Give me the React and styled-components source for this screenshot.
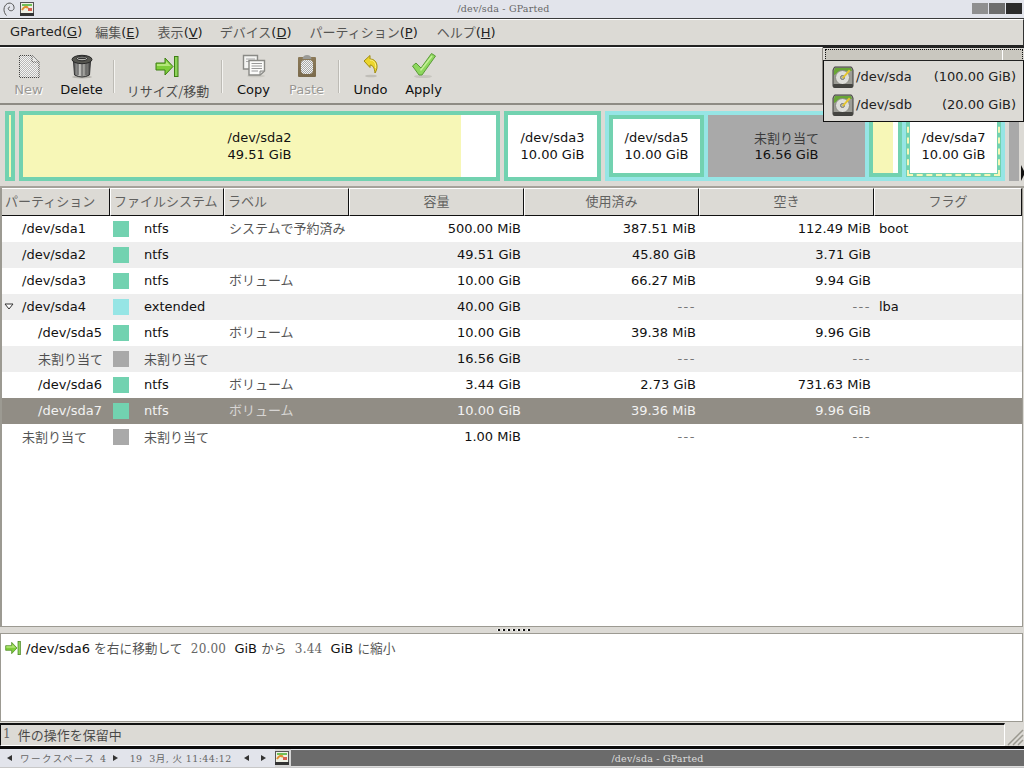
import React from 'react';
import styled, { createGlobalStyle } from 'styled-components';

const Global = createGlobalStyle`
	html, body {
		margin: 0;
		padding: 0;
		background: #dcdad5;
	}
	#root {
		width: 1024px;
		height: 768px;
		overflow: hidden;
	}
	* {
		box-sizing: border-box;
	}
`;

const BG = '#dcdad5';
const GREEN = '#72d2b0';
const CYAN = '#96e5e5';
const YELLOW = '#f7f7b7';
const GRAY = '#a9a9a9';
const LATIN = '"DejaVu Sans", "Noto Sans CJK JP", sans-serif';
const SERIF = '"DejaVu Serif", "Noto Sans CJK JP", serif';

const Screen = styled.div`
	position: relative;
	width: 1024px;
	height: 768px;
	display: flex;
	flex-direction: column;
	background: ${BG};
	font-family: ${LATIN};
	font-size: 13px;
	color: #111;
`;

const Jp = styled.span`
	font-family: "Noto Sans CJK JP", sans-serif;
	font-weight: 400;
	opacity: 0.72;
`;

/* window manager title */
const TitleBar = styled.div`
	height: 19px;
	flex: none;
	display: flex;
	align-items: center;
	padding: 0 2px 1px 3px;
	background: #e2e4eb;
	border-bottom: 1px solid #3a3a3a;
`;

const TitleIcons = styled.div`
	width: 300px;
	display: flex;
	align-items: center;
	gap: 5px;
`;

const TitleText = styled.div`
	flex: 1;
	text-align: center;
	font-family: ${SERIF};
	font-size: 9.5px;
	letter-spacing: 0.2px;
	color: #666;
	padding-right: 268px;
`;

const WinButtons = styled.div`
	display: flex;
	gap: 1px;
`;

const WinButton = styled.div`
	width: 16px;
	height: 11px;
	background: ${p => p.$color};
`;

/* menu */
const MenuBar = styled.div`
	height: 28px;
	flex: none;
	display: flex;
	align-items: center;
	padding: 0 0 3px 10px;
	background: ${BG};
	border-top: 1px solid #fff;
	border-bottom: 2px solid #222;
	border-right: 1px solid #333;
`;

const MenuItem = styled.div`
	margin-right: ${p => p.$gap}px;
	white-space: nowrap;
	color: #222;
`;

const Key = styled.span`
	text-decoration: underline;
`;

/* toolbar */
const ToolRow = styled.div`
	height: 58px;
	flex: none;
	display: flex;
`;

const Toolbar = styled.div`
	width: 823px;
	display: flex;
	align-items: stretch;
	padding-left: 2px;
	background: ${BG};
	border-top: 1px solid #fff;
	border-bottom: 2px solid #8e8b84;
	border-right: 1px solid #8e8b84;
`;

const Tool = styled.div`
	width: ${p => p.$w}px;
	display: flex;
	flex-direction: column;
	align-items: center;
	padding-top: 5px;
	color: ${p => (p.$off ? '#9a9894' : '#111')};
	text-shadow: ${p => (p.$off ? '1px 1px 0 #fff' : 'none')};
`;

const ToolIcon = styled.svg`
	width: 26px;
	height: 26px;
	display: block;
`;

const ResizeSvg = styled.svg`
	width: ${p => (p.$small ? 16 : 24)}px;
	height: ${p => (p.$small ? 16 : 21)}px;
	margin: ${p => (p.$small ? '0' : '3px 3px 2px 0')};
	flex: none;
	display: block;
`;

const ToolLabel = styled.div`
	margin-top: ${p => p.$top || 3}px;
	line-height: 16px;
	white-space: nowrap;
`;

const ToolSep = styled.div`
	width: 2px;
	height: 33px;
	margin: 12px ${p => p.$r}px 0 ${p => p.$l}px;
	background: #f4f3f0;
	border-left: 1px solid #bdbbb5;
`;

const ComboSlot = styled.div`
	flex: 1;
	background: ${BG};
	border-top: 1px solid #222;
	padding: 1px 1px 0 2px;
`;

const ComboFocus = styled.div`
	height: 12px;
	display: flex;
	justify-content: flex-end;
	background: #c9c7bf;
	border: 1px dotted #111;
`;

const ComboArrowCell = styled.div`
	width: 20px;
	border-left: 1px solid #fff;
`;

const Popup = styled.div`
	position: absolute;
	left: 823px;
	top: 60px;
	width: 201px;
	height: 62px;
	padding: 2px 0 0 8px;
	background: ${BG};
	border: 1px solid #111;
	border-top-color: #222;
	z-index: 2;
`;

const PopupRow = styled.div`
	height: 28px;
	display: flex;
	align-items: center;
	gap: 2px;
	padding-right: 7px;
	color: #222;
`;

const PopupText = styled.span`
	padding-bottom: 1px;
`;

const PopupSize = styled(PopupText)`
	margin-left: auto;
`;

/* partition graph */
const Graph = styled.div`
	height: 83px;
	flex: none;
	display: flex;
	gap: 4px;
	padding: 6px 0 0 5px;
	background: ${BG};
	border-bottom: 2px solid #a5a29b;
`;

const PartBox = styled.div`
	width: ${p => p.$w}px;
	height: ${p => p.$h || 70}px;
	flex: none;
	display: flex;
	flex-direction: column;
	align-items: center;
	justify-content: center;
	line-height: 17px;
	padding-bottom: 1px;
	overflow: hidden;
	border: 4px solid ${p => p.$color || GREEN};
	background: ${p => (p.$used !== undefined ? `linear-gradient(90deg, ${YELLOW} ${p.$used}%, #fff ${p.$used}%)` : '#fff')};
	white-space: nowrap;
`;

const SelectedBox = styled(PartBox)`
	outline: 2px dashed ${YELLOW};
	outline-offset: -3px;
`;

const ExtendedBox = styled.div`
	width: 400px;
	height: 70px;
	flex: none;
	display: flex;
	gap: 4px;
	border: 4px solid ${CYAN};
	background: ${CYAN};
`;

const Unallocated = styled.div`
	width: ${p => p.$w}px;
	flex: none;
	display: flex;
	flex-direction: column;
	align-items: center;
	justify-content: center;
	line-height: 17px;
	height: ${p => p.$h}px;
	background: ${GRAY};
`;

const Pointer = styled.div`
	position: absolute;
	left: 1021px;
	top: 165px;
	width: 0;
	height: 0;
	border-top: 8px solid transparent;
	border-bottom: 8px solid transparent;
	border-left: 4px solid #111;
`;

/* list */
const ListFrame = styled.div`
	flex: 1;
	min-height: 0;
	margin-right: 1px;
	background: #fff;
	border-left: 2px solid #9c9a92;
	border-right: 1px solid #9c9a92;
	border-bottom: 1px solid #9c9a92;
`;

const COLS = '108px 114px 125px 175px 175px 175px 148px';

const HeadRow = styled.div`
	display: grid;
	grid-template-columns: ${COLS};
	height: 28px;
	background: ${BG};
`;

const HeadCell = styled.div`
	display: flex;
	align-items: center;
	justify-content: ${p => (p.$center ? 'center' : 'flex-start')};
	padding: 0 0 4px ${p => (p.$center ? 0 : 3)}px;
	border-top: 1px solid #fff;
	border-left: ${p => (p.$first ? 0 : 1)}px solid #fff;
	border-right: 1px solid #111;
	border-bottom: 1px solid #111;
	color: #333;
	white-space: nowrap;
`;

const Row = styled.div`
	display: grid;
	grid-template-columns: ${COLS};
	height: 26px;
	align-items: center;
	background: ${p => (p.$selected ? '#918d85' : p.$alt ? '#eeeeee' : '#fff')};
	color: ${p => (p.$selected ? '#f2f2f2' : '#111')};
`;

const NameCell = styled.div`
	display: flex;
	align-items: center;
	padding: 0 0 2px ${p => p.$indent}px;
	white-space: nowrap;
`;

const Expander = styled.svg`
	width: 10px;
	height: 7px;
	flex: none;
	margin-left: -18px;
	margin-right: 8px;
`;

const FsCell = styled.div`
	display: flex;
	align-items: center;
	gap: 15px;
	white-space: nowrap;
	padding-left: 3px;
`;

const FsName = styled.span`
	padding-bottom: 2px;
`;

const Swatch = styled.span`
	width: 16px;
	height: 16px;
	flex: none;
	background: ${p => p.$color};
`;

const TextCell = styled.div`
	padding: 0 0 2px 5px;
	white-space: nowrap;
`;

const LabelCell = styled(TextCell)`
	padding-bottom: 4px;
`;

const NumCell = styled.div`
	text-align: right;
	padding: 0 3px 2px 0;
	white-space: nowrap;
	letter-spacing: ${p => (p.$dash ? '1.5px' : '0')};
	color: ${p => (p.$dash ? '#777' : 'inherit')};
`;

/* lower part */
const Handle = styled.div`
	height: 6px;
	flex: none;
	display: flex;
	justify-content: center;
	align-items: center;
	background: ${BG};
`;

const Grip = styled.div`
	width: 35px;
	height: 2px;
	margin-left: 4px;
	background: repeating-linear-gradient(90deg, #fff 0 1px, #111 1px 3px, transparent 3px 5px);
`;

const LogFrame = styled.div`
	height: 89px;
	flex: none;
	margin-right: 1px;
	padding: 5px 4px;
	background: #fff;
	border: 1px solid #9c9a92;
`;

const LogLine = styled.div`
	display: flex;
	align-items: center;
	gap: 5px;
	height: 17px;
	white-space: pre;
`;

const LogJp = styled(Jp)`
	font-size: 12.7px;
`;

const LogNum = styled.span`
	font-family: ${SERIF};
	font-size: 12px;
	color: #666;
	letter-spacing: 0.2px;
`;

const StatusBar = styled.div`
	height: 24px;
	flex: none;
	display: flex;
	padding-top: 1px;
	background: ${BG};
`;

const StatusText = styled.div`
	flex: 1;
	display: flex;
	align-items: center;
	gap: 7px;
	padding: 0 0 2px 2px;
	border-top: 2px solid #111;
	border-left: 1px solid #111;
	border-bottom: 1px solid #fff;
	border-right: 1px solid #fff;
	white-space: pre;
`;

const GripBox = styled.svg`
	width: 19px;
	height: 23px;
	flex: none;
	display: block;
`;

const BlackLine = styled.div`
	height: 3px;
	flex: none;
	background: #0c0c0c;
`;

const Panel = styled.div`
	height: 19px;
	flex: none;
	display: flex;
	align-items: center;
	background: #e2e4eb;
	border-bottom: 1px solid #c8c8c8;
	font-family: ${SERIF};
	font-size: 9.5px;
	color: #666;
`;

const PanelLeft = styled.div`
	width: 275px;
	flex: none;
	display: flex;
	align-items: center;
	padding-left: 7px;
	white-space: pre;
`;

const PanelText = styled.span`
	letter-spacing: ${p => p.$ls}px;
`;

const PanelArrow = styled.span`
	width: 0;
	height: 0;
	margin: ${p => p.$m};
	border-top: 3px solid transparent;
	border-bottom: 3px solid transparent;
	border-${p => (p.$left ? 'right' : 'left')}: 5px solid #333;
`;

const TaskButton = styled.div`
	flex: 1;
	align-self: stretch;
	display: flex;
	align-items: center;
	margin: 1px 0 0;
	background: #6b6b6b;
	border-bottom: 1px solid #ddd;
`;

const TaskIconWrap = styled.div`
	width: 16px;
	height: 18px;
	display: flex;
	align-items: center;
	background: #d4d4d4;
`;

const TaskTitle = styled.div`
	flex: 1;
	text-align: center;
	letter-spacing: 0.2px;
	color: #ddd;
`;

const Gparted = ({ size = 14 }) => (
	<svg width={size} height={size} viewBox="0 0 14 14">
		<rect x="0.5" y="0.5" width="13" height="11" fill="#eef0e4" stroke="#555" />
		<rect x="2" y="2" width="10" height="2" fill="#6fbf58" />
		<path d="M2 8 Q5 3 8 6" stroke="#e09030" strokeWidth="2" fill="none" />
		<rect x="8" y="6" width="4" height="3" fill="#d86050" />
		<rect x="0" y="11" width="14" height="3" fill="#333" />
	</svg>
);

const Swirl = () => (
	<svg width="12" height="14" viewBox="0 0 12 14">
		<path d="M3.5 13.5 C0 10 0 4 4.5 1.5 C8.5 0 11.5 3 11 6.5 C10.5 9 7 9.5 5.5 7.5 C4.8 6.3 5.5 5 7 5" fill="none" stroke="#555" strokeWidth="1" />
	</svg>
);

const Disk = () => (
	<svg width="22" height="22" viewBox="0 0 22 22">
		<path d="M2.5 1 H19.5 L21 4 V20 Q21 21.5 19 21.5 H3 Q1 21.5 1 20 V4 Z" fill="#9c9c95" stroke="#3f3f3c" />
		<path d="M3 2 H19 L20 5 Q11 3.5 2 9 V5 Z" fill="#69a636" />
		<circle cx="10.5" cy="11.5" r="7" fill="#dededa" stroke="#8a8a82" />
		<circle cx="10.5" cy="11.5" r="2" fill="#b9b9b1" stroke="#77776f" />
		<path d="M10 11.5 L17 3.5 L18.5 5 L11.5 12.5 Z" fill="#e5c62f" />
		<rect x="1" y="18" width="20" height="3.5" rx="1" fill="#444440" />
	</svg>
);

const Dither = ({ id, a, b }) => (
	<pattern id={id} width="2" height="2" patternUnits="userSpaceOnUse">
		<rect width="2" height="2" fill={b} />
		<rect width="1" height="1" fill={a} />
		<rect x="1" y="1" width="1" height="1" fill={a} />
	</pattern>
);

const NewIcon = () => (
	<ToolIcon viewBox="0 0 26 26">
		<defs>
			<Dither id="newd" a="#b8b8b8" b="#f6f6f4" />
			<Dither id="newe" a="#444" b="#dcdad5" />
		</defs>
		<path d="M3.5 2.5 H16 L23 9 V24.5 H3.5 Z" fill="url(#newd)" stroke="url(#newe)" />
		<path d="M16 2.5 V9 H23" fill="#e8e8e6" stroke="url(#newe)" />
	</ToolIcon>
);

const TrashIcon = () => (
	<ToolIcon viewBox="0 0 26 26">
		<defs>
			<linearGradient id="canb" x1="0" x2="1" y1="0" y2="0">
				<stop offset="0" stopColor="#4d4d4d" />
				<stop offset="0.35" stopColor="#c2c2be" />
				<stop offset="0.75" stopColor="#8a8a86" />
				<stop offset="1" stopColor="#3d3d3d" />
			</linearGradient>
		</defs>
		<ellipse cx="13" cy="24" rx="10" ry="1.5" fill="#b5b3ad" />
		<path d="M4.5 8 L5.5 22 Q13 26 20.5 22 L21.5 8 Z" fill="url(#canb)" stroke="#333" />
		<path d="M9 11 V22 M13 11 V23.5 M17 11 V22" stroke="#555" strokeWidth="1" />
		<ellipse cx="13" cy="6.5" rx="10" ry="4.2" fill="#55554f" stroke="#2a2a2a" />
		<ellipse cx="13" cy="5.5" rx="5.5" ry="2.3" fill="#b5b5af" stroke="#2a2a2a" />
		<rect x="9" y="4.5" width="8" height="1.6" rx="0.8" fill="#333" />
	</ToolIcon>
);

const ResizeIcon = ({ small }) => (
	<ResizeSvg $small={small} viewBox="0 0 24 21">
		<path d="M1 7 H10 V2 L18 10.5 L10 19 V14 H1 Z" fill="#7fce3a" stroke="#3f7f15" />
		<path d="M2 8 H11 V5 L16 10 H2 Z" fill="#b5e67a" />
		<rect x="19.5" y="0.5" width="3.5" height="20" fill="#8ed25a" stroke="#3f7f15" />
	</ResizeSvg>
);

const CopyIcon = () => (
	<ToolIcon viewBox="0 0 26 26">
		<ellipse cx="15" cy="23" rx="9" ry="1.3" fill="#cbc9c3" />
		<path d="M2.5 2.5 H16.5 V16 H2.5 Z" fill="#f4f4f2" stroke="#8a8a86" strokeWidth="1.4" />
		<path d="M5 6 H14 M5 8.5 H14" stroke="#aaa" />
		<path d="M8 7.5 H23.5 V18 L19 22 H8 Z" fill="#fbfbfa" stroke="#8a8a86" strokeWidth="1.4" />
		<path d="M10.5 10.5 H21 M10.5 13 H21 M10.5 15.5 H21 M10.5 18 H17" stroke="#999" />
		<path d="M19 22 V18 H23.5 Z" fill="#d5d5d2" stroke="#8a8a86" />
	</ToolIcon>
);

const PasteIcon = () => (
	<ToolIcon viewBox="0 0 26 26">
		<defs>
			<linearGradient id="pasted" x1="0" x2="0" y1="0" y2="1">
				<stop offset="0" stopColor="#8c7a58" />
				<stop offset="1" stopColor="#7a6a4c" />
			</linearGradient>
			<Dither id="pastei" a="#a8a8a8" b="#f4f4f2" />
		</defs>
		<rect x="4" y="4" width="18" height="20" rx="1" fill="url(#pasted)" />
		<rect x="7" y="7" width="12" height="14" rx="4" fill="url(#pastei)" />
		<path d="M8.5 6 Q9 2 13 2 Q17 2 17.5 6 Z" fill="#9a9a96" />
	</ToolIcon>
);

const UndoIcon = () => (
	<ToolIcon viewBox="0 0 26 26">
		<path d="M6 8 L12 2.5 V6 C19 6 21 14 17 20 C16.5 15 15 12 12 12 V14.5 Z" fill="#ecd62d" stroke="#a08c10" strokeLinejoin="round" />
		<path d="M12 7 C16 7 18.5 11 17.5 15" fill="none" stroke="#fff38a" />
		<ellipse cx="13" cy="23" rx="6" ry="1.3" fill="#c0beb8" />
	</ToolIcon>
);

const ApplyIcon = () => (
	<ToolIcon viewBox="0 0 26 26">
		<ellipse cx="12" cy="23.5" rx="9" ry="1.6" fill="#c7c5bf" />
		<path d="M1.5 13 L5 10 L10 15 L20.5 0.5 L24.5 3 L11 22 L8 22 Z" fill="#8ed85e" stroke="#5b9a38" strokeLinejoin="round" />
		<path d="M9.5 17.5 L21 3" stroke="#c6f09a" strokeWidth="1.5" />
	</ToolIcon>
);

const J = ({ children }) => <Jp>{children}</Jp>;

const rows = [
	{ name: '/dev/sda1', indent: 20, color: GREEN, fs: 'ntfs', label: 'システムで予約済み', size: '500.00 MiB', used: '387.51 MiB', free: '112.49 MiB', flag: 'boot' },
	{ name: '/dev/sda2', indent: 20, color: GREEN, fs: 'ntfs', label: '', size: '49.51 GiB', used: '45.80 GiB', free: '3.71 GiB', flag: '' },
	{ name: '/dev/sda3', indent: 20, color: GREEN, fs: 'ntfs', label: 'ボリューム', size: '10.00 GiB', used: '66.27 MiB', free: '9.94 GiB', flag: '' },
	{ name: '/dev/sda4', indent: 20, color: CYAN, fs: 'extended', label: '', size: '40.00 GiB', used: '---', free: '---', flag: 'lba', open: true },
	{ name: '/dev/sda5', indent: 36, color: GREEN, fs: 'ntfs', label: 'ボリューム', size: '10.00 GiB', used: '39.38 MiB', free: '9.96 GiB', flag: '' },
	{ name: '未割り当て', jp: true, indent: 36, color: GRAY, fs: '未割り当て', label: '', size: '16.56 GiB', used: '---', free: '---', flag: '' },
	{ name: '/dev/sda6', indent: 36, color: GREEN, fs: 'ntfs', label: 'ボリューム', size: '3.44 GiB', used: '2.73 GiB', free: '731.63 MiB', flag: '' },
	{ name: '/dev/sda7', indent: 36, color: GREEN, fs: 'ntfs', label: 'ボリューム', size: '10.00 GiB', used: '39.36 MiB', free: '9.96 GiB', flag: '', selected: true },
	{ name: '未割り当て', jp: true, indent: 20, color: GRAY, fs: '未割り当て', label: '', size: '1.00 MiB', used: '---', free: '---', flag: '' },
];

export default () => {
	const rowJSX = rows.map((r, i) => (
		<Row key={i} $alt={i % 2 === 1} $selected={r.selected}>
			<NameCell $indent={r.indent}>
				{r.open && (
					<Expander viewBox="0 0 10 7">
						<path d="M1 1 H9 L5 6 Z" fill="#fff" stroke="#333" />
					</Expander>
				)}
				{r.jp ? <J>{r.name}</J> : r.name}
			</NameCell>
			<FsCell>
				<Swatch $color={r.color} />
				<FsName>{r.jp ? <J>{r.fs}</J> : r.fs}</FsName>
			</FsCell>
			<LabelCell><J>{r.label}</J></LabelCell>
			<NumCell>{r.size}</NumCell>
			<NumCell $dash={r.used === '---'}>{r.used}</NumCell>
			<NumCell $dash={r.free === '---'}>{r.free}</NumCell>
			<TextCell>{r.flag}</TextCell>
		</Row>
	));

	return (
		<Screen>
			<Global />
			<TitleBar>
				<TitleIcons>
					<Swirl />
					<Gparted />
				</TitleIcons>
				<TitleText>/dev/sda - GParted</TitleText>
				<WinButtons>
					<WinButton $color="#8f8f8f" />
					<WinButton $color="#6d6d6d" />
					<WinButton $color="#2b2b2b" />
				</WinButtons>
			</TitleBar>

			<MenuBar>
				<MenuItem $gap={13}>GParted(<Key>G</Key>)</MenuItem>
				<MenuItem $gap={18}><J>編集</J>(<Key>E</Key>)</MenuItem>
				<MenuItem $gap={17}><J>表示</J>(<Key>V</Key>)</MenuItem>
				<MenuItem $gap={18}><J>デバイス</J>(<Key>D</Key>)</MenuItem>
				<MenuItem $gap={19}><J>パーティション</J>(<Key>P</Key>)</MenuItem>
				<MenuItem $gap={0}><J>ヘルプ</J>(<Key>H</Key>)</MenuItem>
			</MenuBar>

			<ToolRow>
				<Toolbar>
					<Tool $w={53} $off><NewIcon /><ToolLabel>New</ToolLabel></Tool>
					<Tool $w={53}><TrashIcon /><ToolLabel>Delete</ToolLabel></Tool>
					<ToolSep $l={5} $r={3} />
					<Tool $w={100}><ResizeIcon /><ToolLabel $top={4}><J>リサイズ/移動</J></ToolLabel></Tool>
					<ToolSep $l={3} $r={4} />
					<Tool $w={53}><CopyIcon /><ToolLabel>Copy</ToolLabel></Tool>
					<Tool $w={53} $off><PasteIcon /><ToolLabel>Paste</ToolLabel></Tool>
					<ToolSep $l={5} $r={4} />
					<Tool $w={53}><UndoIcon /><ToolLabel>Undo</ToolLabel></Tool>
					<Tool $w={53}><ApplyIcon /><ToolLabel>Apply</ToolLabel></Tool>
				</Toolbar>
				<ComboSlot>
					<ComboFocus><ComboArrowCell /></ComboFocus>
				</ComboSlot>
			</ToolRow>

			<Popup>
				<PopupRow><Disk /><PopupText>/dev/sda</PopupText><PopupSize>(100.00 GiB)</PopupSize></PopupRow>
				<PopupRow><Disk /><PopupText>/dev/sdb</PopupText><PopupSize>(20.00 GiB)</PopupSize></PopupRow>
			</Popup>

			<Graph>
				<PartBox $w={10} $used={100} />
				<PartBox $w={481} $used={92.6}>
					<div>/dev/sda2</div>
					<div>49.51 GiB</div>
				</PartBox>
				<PartBox $w={97}>
					<div>/dev/sda3</div>
					<div>10.00 GiB</div>
				</PartBox>
				<ExtendedBox>
					<PartBox $w={95} $h={62}>
						<div>/dev/sda5</div>
						<div>10.00 GiB</div>
					</PartBox>
					<Unallocated $w={157} $h={62}>
						<J>未割り当て</J>
						<div>16.56 GiB</div>
					</Unallocated>
					<PartBox $w={33} $h={62} $used={80} />
					<SelectedBox $w={95} $h={62}>
						<div>/dev/sda7</div>
						<div>10.00 GiB</div>
					</SelectedBox>
				</ExtendedBox>
				<Unallocated $w={10} $h={70} />
			</Graph>
			<Pointer />

			<ListFrame>
				<HeadRow>
					<HeadCell $first><J>パーティション</J></HeadCell>
					<HeadCell><J>ファイルシステム</J></HeadCell>
					<HeadCell><J>ラベル</J></HeadCell>
					<HeadCell $center><J>容量</J></HeadCell>
					<HeadCell $center><J>使用済み</J></HeadCell>
					<HeadCell $center><J>空き</J></HeadCell>
					<HeadCell $center><J>フラグ</J></HeadCell>
				</HeadRow>
				{rowJSX}
			</ListFrame>

			<Handle><Grip /></Handle>

			<LogFrame>
				<LogLine>
					<ResizeIcon small />
					<span>/dev/sda6 <LogJp>を右に移動して</LogJp>  <LogNum>20.00</LogNum>  GiB <LogJp>から</LogJp>  <LogNum>3.44</LogNum>  GiB <LogJp>に縮小</LogJp></span>
				</LogLine>
			</LogFrame>

			<StatusBar>
				<StatusText><LogNum>1</LogNum><J>件の操作を保留中</J></StatusText>
				<GripBox viewBox="0 0 19 23">
					<path d="M3 22 L18 7 M8 22 L18 12 M13 22 L18 17" stroke="#9a988f" strokeWidth="1.5" />
				</GripBox>
			</StatusBar>
			<BlackLine />

			<Panel>
				<PanelLeft>
					<PanelArrow $left $m="0 8px 0 0" />
					<PanelText $ls={1.5}>ワークスペース 4</PanelText>
					<PanelArrow $m="0 12px 0 5px" />
					<PanelText $ls={0.4}>19  3月, 火 11:44:12</PanelText>
					<PanelArrow $left $m="0 12px 0 12px" />
					<PanelArrow $m="0" />
				</PanelLeft>
				<TaskButton>
					<TaskIconWrap><Gparted /></TaskIconWrap>
					<TaskTitle>/dev/sda - GParted</TaskTitle>
				</TaskButton>
			</Panel>
		</Screen>
	);
};
